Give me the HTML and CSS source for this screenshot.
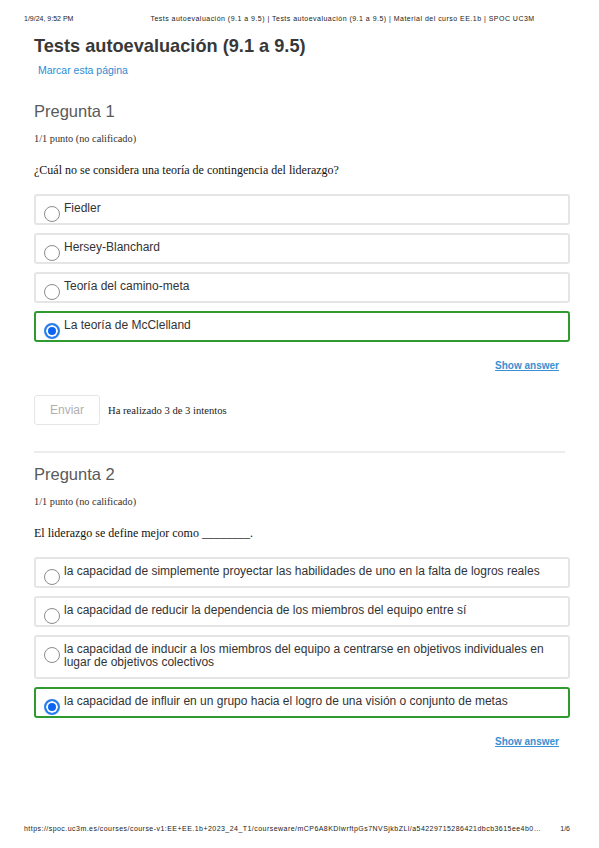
FILE: index.html
```html
<!DOCTYPE html>
<html lang="es">
<head>
<meta charset="utf-8">
<title>Tests autoevaluación (9.1 a 9.5)</title>
<link rel="stylesheet" href="styles.css">
</head>
<body>
<div class="page">
  <header class="print-header">
    <span class="print-date">1/9/24, 9:52 PM</span>
    <span class="print-title">Tests autoevaluación (9.1 a 9.5) | Tests autoevaluación (9.1 a 9.5) | Material del curso EE.1b | SPOC UC3M</span>
  </header>

  <main class="content">
    <h1 class="unit-title">Tests autoevaluación (9.1 a 9.5)</h1>
    <a class="bookmark" href="#">Marcar esta página</a>

    <section class="problem first">
      <h2 class="problem-title">Pregunta 1</h2>
      <div class="points">1/1 punto (no calificado)</div>
      <p class="prompt">¿Cuál no se considera una teoría de contingencia del liderazgo?</p>
      <div class="choices">
        <div class="choice"><span class="radio"></span><span class="choice-text">Fiedler</span></div>
        <div class="choice"><span class="radio"></span><span class="choice-text">Hersey-Blanchard</span></div>
        <div class="choice"><span class="radio"></span><span class="choice-text">Teoría del camino-meta</span></div>
        <div class="choice correct"><span class="radio checked"></span><span class="choice-text">La teoría de McClelland</span></div>
      </div>
      <div class="actions"><a class="show-answer" href="#">Show answer</a></div>
      <div class="submit-row">
        <button class="submit" type="button">Enviar</button>
        <span class="attempts">Ha realizado 3 de 3 intentos</span>
      </div>
    </section>

    <hr class="divider">

    <section class="problem">
      <h2 class="problem-title">Pregunta 2</h2>
      <div class="points">1/1 punto (no calificado)</div>
      <p class="prompt">El liderazgo se define mejor como ________.</p>
      <div class="choices">
        <div class="choice"><span class="radio"></span><span class="choice-text">la capacidad de simplemente proyectar las habilidades de uno en la falta de logros reales</span></div>
        <div class="choice"><span class="radio"></span><span class="choice-text">la capacidad de reducir la dependencia de los miembros del equipo entre sí</span></div>
        <div class="choice"><span class="radio"></span><span class="choice-text">la capacidad de inducir a los miembros del equipo a centrarse en objetivos individuales en lugar de objetivos colectivos</span></div>
        <div class="choice correct"><span class="radio checked"></span><span class="choice-text">la capacidad de influir en un grupo hacia el logro de una visión o conjunto de metas</span></div>
      </div>
      <div class="actions"><a class="show-answer" href="#">Show answer</a></div>
    </section>
  </main>

  <footer class="print-footer">
    <span class="print-url">https://spoc.uc3m.es/courses/course-v1:EE+EE.1b+2023_24_T1/courseware/mCP6A8KDlwrftpGs7NVSjkbZLl/a54229715286421dbcb3615ee4b0…</span>
    <span class="print-page">1/6</span>
  </footer>
</div>
</body>
</html>
```

FILE: styles.css
```css
* { box-sizing: border-box; }

html, body {
  margin: 0;
  padding: 0;
  background: #ffffff;
}

body {
  font-family: "Liberation Sans", Arial, sans-serif;
  color: #333333;
}

.page {
  width: 599px;
  height: 848px;
  display: flex;
  flex-direction: column;
}

.print-header {
  display: flex;
  padding: 14px 0 0 24px;
  font-size: 7px;
  line-height: 10px;
  color: #222222;
  gap: 77px;
}

.print-title {
  letter-spacing: 0.48px;
}

.content {
  padding: 0 29px 0 34px;
}

.unit-title {
  margin: 9px 0 0;
  font-size: 18.2px;
  line-height: 26px;
  font-weight: bold;
  color: #383838;
}

.bookmark {
  display: inline-block;
  margin: 4px 0 0 4px;
  font-size: 10.5px;
  line-height: 14px;
  color: #2d8bd2;
  text-decoration: none;
}

.problem.first {
  margin-top: 22px;
}

.problem-title {
  margin: 0;
  font-size: 16.5px;
  line-height: 22px;
  font-weight: normal;
  color: #5a5a5a;
}

.points {
  margin-top: 11px;
  font-family: "Liberation Serif", "Times New Roman", serif;
  font-size: 10.3px;
  line-height: 12px;
  color: #333333;
}

.prompt {
  margin: 17px 0 0;
  font-family: "Liberation Serif", "Times New Roman", serif;
  font-size: 12px;
  line-height: 16px;
  color: #111111;
}

.choices {
  margin-top: 16px;
  display: flex;
  flex-direction: column;
  gap: 8px;
}

.choice {
  display: flex;
  align-items: flex-start;
  border: 2px solid #e5e5e5;
  border-radius: 3px;
  padding: 6px 10px 8px 8px;
  font-size: 12px;
  line-height: 13px;
  color: #333333;
}

.choice.correct {
  border-color: #2f9a2f;
}

.radio {
  flex: none;
  width: 16px;
  height: 16px;
  margin: 4px 4px -8px 0;
  border: 1.5px solid #8c8c8c;
  border-radius: 50%;
  background: #ffffff;
}

.radio.checked {
  border: 2px solid #2a7fe8;
  background: #0a66f0;
  box-shadow: inset 0 0 0 2px #ffffff;
}

.actions {
  display: flex;
  justify-content: flex-end;
  padding-right: 11px;
  margin-top: 17px;
}

.show-answer {
  font-size: 10px;
  line-height: 14px;
  font-weight: bold;
  color: #3a8fd0;
  text-decoration: underline;
}

.submit-row {
  display: flex;
  align-items: center;
  gap: 8px;
  margin-top: 22px;
}

.submit {
  width: 66px;
  height: 30px;
  border: 1px solid #e6e6e6;
  border-radius: 3px;
  background: #ffffff;
  color: #b0b0b0;
  font-family: "Liberation Sans", Arial, sans-serif;
  font-size: 12px;
}

.attempts {
  font-family: "Liberation Serif", "Times New Roman", serif;
  font-size: 10.6px;
  color: #222222;
}

.divider {
  margin: 26px 5px 0 0;
  border: 0;
  border-top: 2px solid #ececec;
}

.problem {
  margin-top: 10px;
}

.print-footer {
  margin-top: auto;
  display: flex;
  justify-content: space-between;
  align-items: baseline;
  padding: 0 29px 14px 24px;
  font-size: 7px;
  line-height: 10px;
  color: #222222;
}

.print-url {
  letter-spacing: 0.46px;
  white-space: nowrap;
}
```
